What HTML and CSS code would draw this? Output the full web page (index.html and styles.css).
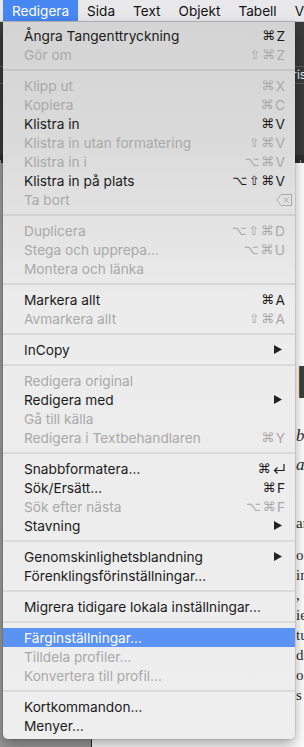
FILE: index.html
```html
<!DOCTYPE html>
<html lang="sv">
    <head>
        <meta charset="UTF-8">
        <meta name="viewport" content="width=device-width, initial-scale=1.0">
        <title>Redigera</title>
        <link rel="stylesheet" href="styles.css">
    </head>

    <body>
        <div class="screen">
            <div class="menubar">
                <span class="menubar-item active">Redigera</span>
                <span class="menubar-item">Sida</span>
                <span class="menubar-item">Text</span>
                <span class="menubar-item">Objekt</span>
                <span class="menubar-item">Tabell</span>
                <span class="menubar-item">Visa</span>
            </div>

            <!-- the app window behind the menu -->
            <div class="app">
                <div class="toolbar">
                    <div class="tool-row"></div>
                    <div class="tool-row field">Iris</div>
                    <div class="tool-row"></div>
                </div>
                <div class="ruler"></div>
                <div class="workspace">
                    <div class="pasteboard"></div>
                    <div class="page">
                        <div class="page-title">R</div>
                        <p class="line lead">be</p>
                        <p class="line lead tight">a</p>
                        <p class="line first">an</p>
                        <p class="line para">on</p>
                        <p class="line">in</p>
                        <p class="line">, c</p>
                        <p class="line">ie</p>
                        <p class="line">tu</p>
                        <p class="line">di</p>
                        <p class="line">oi</p>
                        <p class="line">s r</p>
                    </div>
                </div>
            </div>

            <div class="menu">
                <div class="item"><span class="label">Ångra Tangenttryckning</span><span class="keys"><span class="mod">⌘</span>Z</span></div>
                <div class="item disabled"><span class="label">Gör om</span><span class="keys"><span class="mod">⇧⌘</span>Z</span></div>
                <div class="sep"></div>
                <div class="item disabled"><span class="label">Klipp ut</span><span class="keys"><span class="mod">⌘</span>X</span></div>
                <div class="item disabled"><span class="label">Kopiera</span><span class="keys"><span class="mod">⌘</span>C</span></div>
                <div class="item"><span class="label">Klistra in</span><span class="keys"><span class="mod">⌘</span>V</span></div>
                <div class="item disabled"><span class="label">Klistra in utan formatering</span><span class="keys"><span class="mod">⇧⌘</span>V</span></div>
                <div class="item disabled"><span class="label">Klistra in i</span><span class="keys"><span class="mod">⌥⌘</span>V</span></div>
                <div class="item"><span class="label">Klistra in på plats</span><span class="keys"><span class="mod">⌥⇧⌘</span>V</span></div>
                <div class="item disabled">
                    <span class="label">Ta bort</span>
                    <svg class="delete-key" width="16" height="12" viewBox="0 0 16 12">
                        <path d="M5 0.5 H15.5 V11.5 H5 L0.7 6 Z" fill="none" stroke="currentColor"/>
                        <path d="M8 3.5 L12.5 8.5 M12.5 3.5 L8 8.5" stroke="currentColor"/>
                    </svg>
                </div>
                <div class="sep"></div>
                <div class="item disabled"><span class="label">Duplicera</span><span class="keys"><span class="mod">⌥⇧⌘</span>D</span></div>
                <div class="item disabled"><span class="label">Stega och upprepa…</span><span class="keys"><span class="mod">⌥⌘</span>U</span></div>
                <div class="item disabled"><span class="label">Montera och länka</span></div>
                <div class="sep"></div>
                <div class="item"><span class="label">Markera allt</span><span class="keys"><span class="mod">⌘</span>A</span></div>
                <div class="item disabled"><span class="label">Avmarkera allt</span><span class="keys"><span class="mod">⇧⌘</span>A</span></div>
                <div class="sep"></div>
                <div class="item"><span class="label">InCopy</span><svg class="arrow" width="8" height="9" viewBox="0 0 8 9"><path d="M0 0 L8 4.5 L0 9 Z"/></svg></div>
                <div class="sep"></div>
                <div class="item disabled"><span class="label">Redigera original</span></div>
                <div class="item"><span class="label">Redigera med</span><svg class="arrow" width="8" height="9" viewBox="0 0 8 9"><path d="M0 0 L8 4.5 L0 9 Z"/></svg></div>
                <div class="item disabled"><span class="label">Gå till källa</span></div>
                <div class="item disabled"><span class="label">Redigera i Textbehandlaren</span><span class="keys"><span class="mod">⌘</span>Y</span></div>
                <div class="sep"></div>
                <div class="item">
                    <span class="label">Snabbformatera…</span>
                    <span class="keys"><span class="mod">⌘</span><svg class="return-key" width="12" height="10" viewBox="0 0 12 10"><path d="M11 0 V6.5 H1.5" fill="none" stroke="currentColor" stroke-width="1.2"/><path d="M4.5 3.5 L1.5 6.5 L4.5 9.5" fill="none" stroke="currentColor" stroke-width="1.2"/></svg></span>
                </div>
                <div class="item"><span class="label">Sök/Ersätt…</span><span class="keys"><span class="mod">⌘</span>F</span></div>
                <div class="item disabled"><span class="label">Sök efter nästa</span><span class="keys"><span class="mod">⌥⌘</span>F</span></div>
                <div class="item"><span class="label">Stavning</span><svg class="arrow" width="8" height="9" viewBox="0 0 8 9"><path d="M0 0 L8 4.5 L0 9 Z"/></svg></div>
                <div class="sep"></div>
                <div class="item"><span class="label">Genomskinlighetsblandning</span><svg class="arrow" width="8" height="9" viewBox="0 0 8 9"><path d="M0 0 L8 4.5 L0 9 Z"/></svg></div>
                <div class="item"><span class="label">Förenklingsförinställningar…</span></div>
                <div class="sep"></div>
                <div class="item"><span class="label">Migrera tidigare lokala inställningar…</span></div>
                <div class="sep"></div>
                <div class="item selected"><span class="label">Färginställningar…</span></div>
                <div class="item disabled"><span class="label">Tilldela profiler…</span></div>
                <div class="item disabled"><span class="label">Konvertera till profil…</span></div>
                <div class="sep"></div>
                <div class="item"><span class="label">Kortkommandon…</span></div>
                <div class="item"><span class="label">Menyer…</span></div>
            </div>
        </div>
    </body>
</html>
```

FILE: styles.css
```css
* {
    box-sizing: border-box;
}

body {
    margin: 0;
    font-family: Inter, "Liberation Sans", sans-serif;
}

.screen {
    position: relative;
    width: 304px;
    height: 747px;
    overflow: hidden;
    display: flex;
    flex-direction: column;
    background-color: #999;
}

/* top menu bar */
.menubar {
    height: 22px;
    flex-shrink: 0;
    display: flex;
    padding-left: 3px;
    background-color: #e8e8eb;
    border-bottom: 1px solid #c6c6c9;
    font-size: 13.6px;
    color: #111;
    white-space: nowrap;
}

.menubar-item {
    display: flex;
    align-items: center;
    padding: 0 9px;
}

.menubar-item.active {
    background-color: #4787f2;
    color: #fff;
}

/* window behind */
.app {
    flex: 1;
    display: flex;
    flex-direction: column;
}

.toolbar {
    height: 133px;
    flex-shrink: 0;
    background-color: #3b3b3b;
    display: flex;
    flex-direction: column;
}

.tool-row {
    height: 44px;
}

.tool-row.field {
    height: 18px;
    border-top: 1px solid #5e5e5e;
    border-bottom: 1px solid #5e5e5e;
    padding-left: 289px;
    font-size: 12px;
    line-height: 16px;
    color: #f2f2f2;
    white-space: nowrap;
}

.ruler {
    height: 8px;
    flex-shrink: 0;
    background-color: #2e2e2e;
    background-image: repeating-linear-gradient(90deg, #9a9a9a 0 1px, transparent 1px 6px);
    background-size: 100% 3px;
    background-repeat: no-repeat;
    background-position: bottom;
}

.workspace {
    flex: 1;
    display: flex;
}

.pasteboard {
    width: 92px;
    background-color: #9b9b9b;
    border-right: 1px solid #2a2a2a;
}

.page {
    flex: 1;
    background-color: #fff;
    padding-left: 204px;
    padding-top: 196px;
    white-space: nowrap;
    overflow: hidden;
    font-family: "Liberation Serif", serif;
    font-size: 15px;
    color: #2b2b2b;
}

.page-title {
    font-family: "Liberation Sans", sans-serif;
    font-weight: bold;
    font-size: 46px;
    line-height: 46px;
    color: #36423f;
}

.line {
    margin: 0;
    line-height: 20px;
}

.line.lead {
    font-style: italic;
    font-size: 17px;
    margin-top: 21px;
}

.line.lead.tight {
    margin-top: 9px;
}

.line.first {
    margin-top: 38px;
}

.line.para {
    margin-top: 12px;
}

/* the open menu */
.menu {
    position: absolute;
    top: 22px;
    left: 3px;
    width: 292px;
    padding: 4px 0;
    background: linear-gradient(#d4d4d4 0, #dadada 120px, #ececec 280px, #eeeeee 100%);
    border-radius: 0 0 5px 5px;
    box-shadow: 0 6px 14px rgba(0, 0, 0, 0.35), 0 0 0 1px rgba(0, 0, 0, 0.08);
    font-size: 13.7px;
    color: #1b1b1b;
}

.item {
    height: 19px;
    display: flex;
    align-items: center;
    justify-content: space-between;
    padding: 0 10px 0 21px;
    white-space: nowrap;
}

.item.disabled {
    color: #a9a9a9;
}

.item.selected {
    background-color: #5b93f5;
    color: #fff;
}

.keys {
    display: flex;
    align-items: center;
}

.mod {
    font-family: "DejaVu Sans", sans-serif;
    font-size: 13px;
    letter-spacing: 1.5px;
}

.arrow {
    margin-right: 3px;
    fill: #222;
}

.delete-key {
    margin-right: -7px;
}

.return-key {
    margin-left: 1px;
}

.sep {
    height: 2px;
    margin: 5px 0;
    background-color: rgba(0, 0, 0, 0.08);
}
```
